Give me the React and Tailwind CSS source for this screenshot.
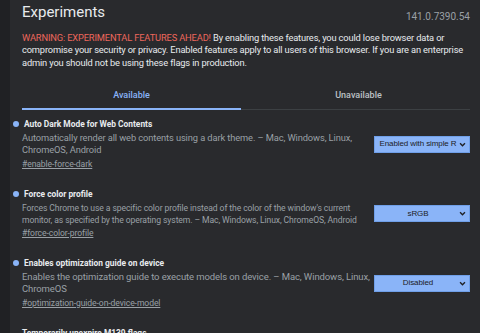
export default function App() {
  const items = [
    {
      title: "Auto Dark Mode for Web Contents",
      lines: ["Automatically render all web contents using a dark theme. – Mac, Windows, Linux,", "ChromeOS, Android"],
      size: "text-[9.3px]",
      link: "#enable-force-dark",
      value: "Enabled with simple R",
    },
    {
      title: "Force color profile",
      lines: ["Forces Chrome to use a specific color profile instead of the color of the window's current", "monitor, as specified by the operating system. – Mac, Windows, Linux, ChromeOS, Android"],
      size: "text-[8.6px]",
      link: "#force-color-profile",
      value: "sRGB",
    },
    {
      title: "Enables optimization guide on device",
      lines: ["Enables the optimization guide to execute models on device. – Mac, Windows, Linux,", "ChromeOS"],
      size: "text-[9.5px]",
      link: "#optimization-guide-on-device-model",
      value: "Disabled",
    },
  ];
  return (
    <div className="flex w-[480px] h-[333px] overflow-hidden bg-[#292a2d] font-[family-name:Roboto,sans-serif]">
      <div className="w-[10px] shrink-0 bg-[#202124]" />
      <div className="flex-1 pl-[12px] pr-[10px]">
        <div className="flex items-start justify-between pt-[1px]">
          <h1 className="text-[15px] leading-[22px] text-[#e8eaed]">Experiments</h1>
          <span className="mt-[9px] text-[10px] leading-[14px] text-[#9aa0a6]">141.0.7390.54</span>
        </div>
        <p className="mt-[7.5px] whitespace-nowrap text-[9.3px] leading-[12.5px] tracking-[-0.15px] text-[#e8eaed]">
          <span className="text-[#ee675c]">WARNING: EXPERIMENTAL FEATURES AHEAD!</span> By enabling these features, you could lose browser data or
          <br />
          compromise your security or privacy. Enabled features apply to all users of this browser. If you are an enterprise
          <br />
          admin you should not be using these flags in production.
        </p>
        <div className="mt-[18.5px] flex border-b border-[#3c4043]">
          <div className="-mb-[1px] w-[219px] border-b-2 border-[#8ab4f8] pb-[6.5px] text-center text-[9px] leading-[14px] font-medium text-[#8ab4f8]">
            Available
          </div>
          <div className="flex-1 pb-[6.5px] pl-[6px] text-center text-[9px] leading-[14px] font-medium text-[#bdc1c6]">
            Unavailable
          </div>
        </div>
        <div className="mt-[7px] flex flex-col gap-[16px]">
          {items.map((it) => (
            <div key={it.title}>
              <div className="-ml-[9px] flex items-center gap-[5px]">
                <span className="h-[6px] w-[6px] shrink-0 rounded-full bg-[#8ab4f8]" />
                <span className="text-[8.4px] leading-[14px] font-bold text-[#e8eaed]">{it.title}</span>
              </div>
              <div className="mt-[1px] flex items-center justify-between">
                <p className={`whitespace-nowrap leading-[12px] tracking-[-0.1px] text-[#9aa0a6] ${it.size}`}>
                  {it.lines.map((l) => (
                    <span key={l} className="block">{l}</span>
                  ))}
                </p>
                <div className="flex h-[17px] w-[96px] shrink-0 items-center border border-[#6f9fe8] bg-[#8ab4f8] pl-[2px] pr-[3px] font-[family-name:Liberation_Sans,Arial,sans-serif] text-[8px] tracking-[-0.1px] text-[#202124]">
                  <span className="flex-1 overflow-hidden whitespace-nowrap text-center">{it.value}</span>
                  <svg width="7" height="7" viewBox="0 0 8 8" className="shrink-0">
                    <path d="M1.2 2.6 L4 5.4 L6.8 2.6" stroke="#202124" strokeWidth="1.6" fill="none" />
                  </svg>
                </div>
              </div>
              <p className="mt-[1.5px] text-[8.6px] leading-[13px] tracking-[-0.1px] text-[#9aa0a6] underline">{it.link}</p>
            </div>
          ))}
          <div className="text-[8.4px] leading-[14px] font-bold text-[#e8eaed]">Temporarily unexpire M139 flags.</div>
        </div>
      </div>
    </div>
  );
}
